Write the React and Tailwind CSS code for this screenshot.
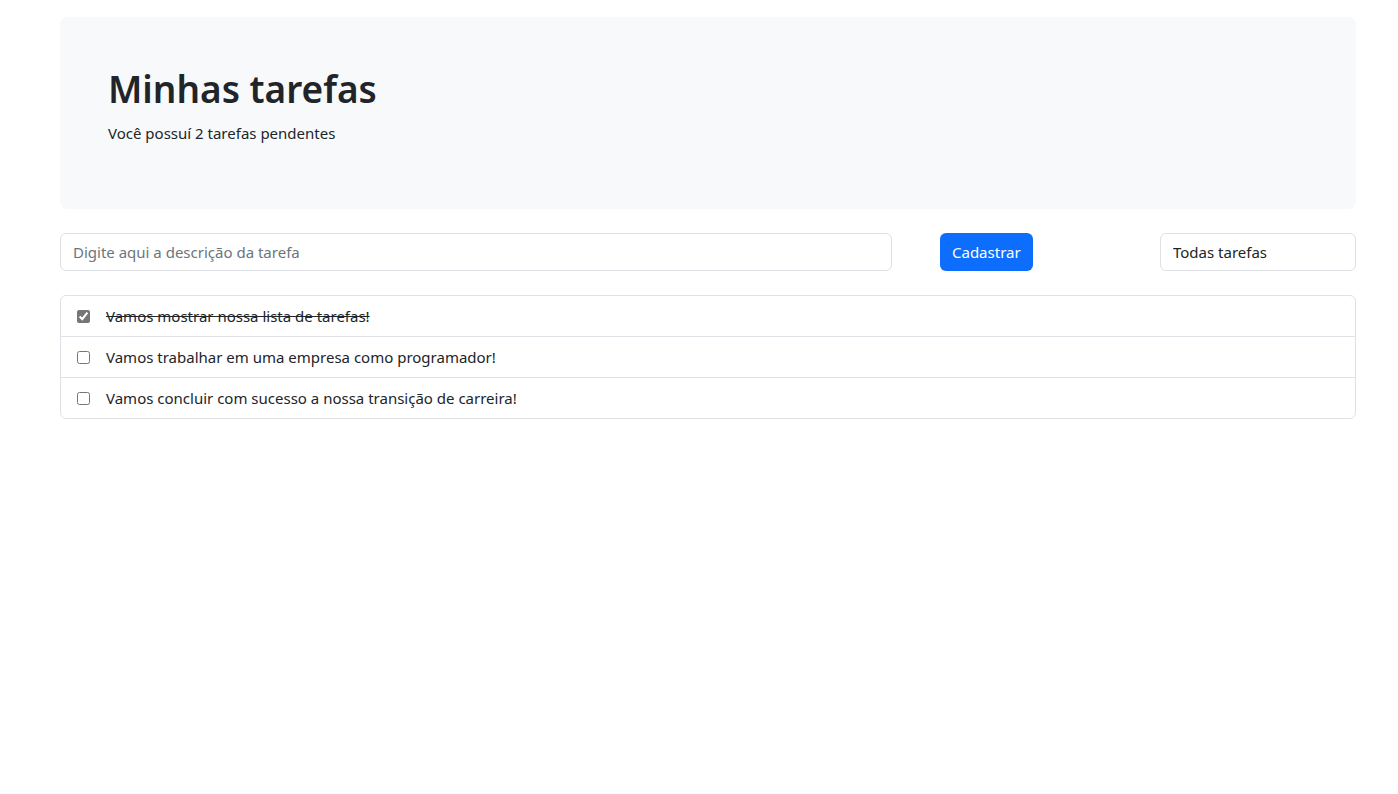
import { useState } from 'react';

const initialTasks = [
  { id: 1, text: 'Vamos mostrar nossa lista de tarefas!', done: true },
  { id: 2, text: 'Vamos trabalhar em uma empresa como programador!', done: false },
  { id: 3, text: 'Vamos concluir com sucesso a nossa transição de carreira!', done: false },
];

export default function App() {
  const [tasks, setTasks] = useState(initialTasks);
  const pending = tasks.filter(t => !t.done).length;

  const toggle = id => setTasks(tasks.map(t => (t.id === id ? { ...t, done: !t.done } : t)));

  return (
    <div className="min-h-screen bg-white text-[#212529] font-['Noto_Sans',sans-serif]">
      <div className="w-[1296px] ml-[60px] pt-[17px]">
        {/* Header */}
        <div className="bg-[#f8f9fa] rounded-lg p-12">
          <h1 className="text-[37px] leading-[48px] font-semibold mb-2">Minhas tarefas</h1>
          <p className="text-[15px] leading-6 mb-4">Você possuí {pending} tarefas pendentes</p>
        </div>

        {/* Form */}
        <div className="flex items-center mt-6">
          <input
            type="text"
            placeholder="Digite aqui a descrição da tarefa"
            className="w-[832px] h-[38px] border border-[#dee2e6] rounded-md px-3 text-[15px] placeholder:text-[#6c757d] outline-none"
          />
          <button className="ml-12 h-[38px] px-3 rounded-md bg-[#0d6efd] text-white text-[15px]">Cadastrar</button>
          <select className="ml-auto w-[196px] h-[38px] border border-[#dee2e6] rounded-md px-3 text-[15px] appearance-none bg-white outline-none">
            <option>Todas tarefas</option>
            <option>Pendentes</option>
            <option>Concluídas</option>
          </select>
        </div>

        {/* List */}
        <ul className="mt-6 border border-[#dee2e6] rounded-md">
          {tasks.map((t, i) => (
            <li
              key={t.id}
              className={`flex items-center px-4 ${i > 0 ? 'h-[41px] border-t border-[#dee2e6]' : 'h-10'}`}
            >
              <input
                type="checkbox"
                checked={t.done}
                onChange={() => toggle(t.id)}
                className="w-[13px] h-[13px] accent-[#767676]"
              />
              <span className={`ml-4 text-[15px] ${t.done ? 'line-through' : ''}`}>{t.text}</span>
            </li>
          ))}
        </ul>
      </div>
    </div>
  );
}
